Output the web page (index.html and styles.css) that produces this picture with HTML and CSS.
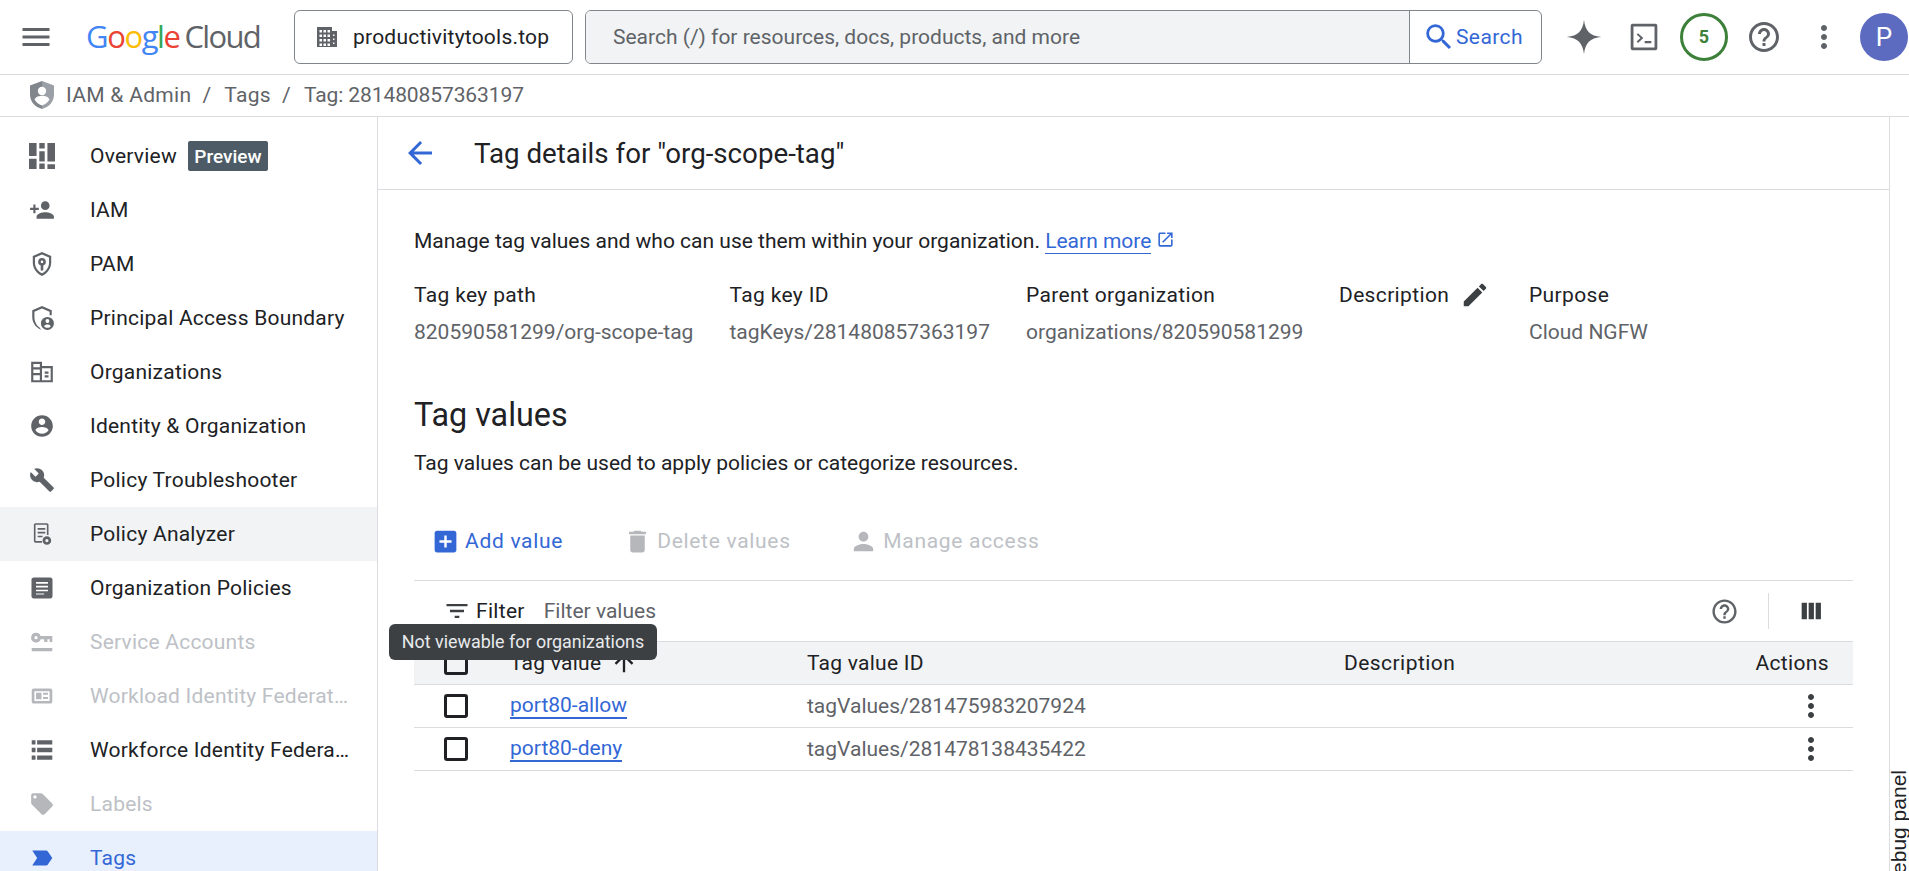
FILE: index.html
```html
<!DOCTYPE html>
<html lang="en">
<head>
<meta charset="utf-8">
<title>Tag details</title>
<link rel="stylesheet" href="styles.css">
</head>
<body>
<svg class="defs" aria-hidden="true">
  <symbol id="i-menu" viewBox="0 0 24 24"><path d="M3 18h18v-2H3v2zm0-5h18v-2H3v2zm0-7v2h18V6H3z"/></symbol>
  <symbol id="i-domain" viewBox="0 0 24 24"><path fill-rule="evenodd" d="M2 2h15v4h5v16H2V2zm2.500 3v2.500h2.500V5H4.500zm4 0v2.500h2.500V5H8.500zm4 0v2.500H15V5h-2.500zm-8 4.500V12h2.500V9.500H4.500zm4 0V12h2.500V9.500H8.500zm4 0V12H15V9.500h-2.500zm-8 4.500v2.500h2.500V14H4.500zm4 0v2.500h2.500V14H8.500zm4 0v2.500H15V14h-2.500zm-8 4.500V21h2.500v-2.500H4.500zm4 0V21h2.500v-2.500H8.500zm4 0V21H15v-2.500h-2.500zM18 9.500V11h1.500V9.500H18zm0 4V15h1.500v-1.500H18zm0 4V19h1.500v-1.500H18z"/></symbol>
  <symbol id="i-search" viewBox="0 0 24 24"><path d="M15.500 14h-.79l-.28-.27A6.471 6.471 0 0 0 16 9.500 6.500 6.500 0 1 0 9.500 16c1.610 0 3.090-.59 4.230-1.570l.27.28v.79l5 4.990L20.490 19l-4.990-5zm-6 0C7.010 14 5 11.990 5 9.500S7.010 5 9.500 5 14 7.010 14 9.500 11.990 14 9.500 14z"/></symbol>
  <symbol id="i-spark" viewBox="0 0 24 24"><path d="M12 0.500C12.800 8 16 11.200 23.500 12 16 12.800 12.800 16 12 23.500 11.200 16 8 12.800 0.500 12 8 11.200 11.200 8 12 0.500z"/></symbol>
  <symbol id="i-terminal" viewBox="0 0 24 24"><path fill-rule="evenodd" d="M3.500 2h17A1.500 1.500 0 0 1 22 3.500v17a1.500 1.500 0 0 1-1.500 1.500h-17A1.500 1.500 0 0 1 2 20.500v-17A1.500 1.500 0 0 1 3.500 2zm.6 2.100v15.800h15.800V4.100H4.100z"/><path d="M6.500 10.200l1-1.100 4 3.700-4 3.700-1-1.100 2.800-2.600-2.800-2.600zM12.500 15h5v1.600h-5z"/></symbol>
  <symbol id="i-help" viewBox="0 0 24 24"><path d="M11 18h2v-2h-2v2zm1-16C6.480 2 2 6.480 2 12s4.480 10 10 10 10-4.480 10-10S17.520 2 12 2zm0 18c-4.410 0-8-3.590-8-8s3.590-8 8-8 8 3.590 8 8-3.590 8-8 8zm0-14c-2.210 0-4 1.790-4 4h2c0-1.100.9-2 2-2s2 .9 2 2c0 2-3 1.750-3 5h2c0-2.250 3-2.500 3-5 0-2.210-1.790-4-4-4z"/></symbol>
  <symbol id="i-more" viewBox="0 0 24 24"><path d="M12 8c1.100 0 2-.9 2-2s-.9-2-2-2-2 .9-2 2 .9 2 2 2zm0 2c-1.100 0-2 .9-2 2s.9 2 2 2 2-.9 2-2-.9-2-2-2zm0 6c-1.100 0-2 .9-2 2s.9 2 2 2 2-.9 2-2-.9-2-2-2z"/></symbol>
  <symbol id="i-back" viewBox="0 0 24 24"><path d="M20 11H7.830l5.590-5.590L12 4l-8 8 8 8 1.410-1.410L7.830 13H20v-2z"/></symbol>
  <symbol id="i-iamshield" viewBox="0 0 24 28"><path fill="#80868b" d="M12 0L0 4.500v9C0 20.500 5 26 12 28V0z"/><path fill="#9aa0a6" d="M12 0l12 4.500v9C24 20.500 19 26 12 28V0z"/><circle cx="12" cy="10" r="4.200" fill="#fff"/><path fill="#fff" d="M4.500 18.500C6 15.500 9 14.800 12 14.800s6 .7 7.500 3.700c-1.700 2.800-4.300 4.900-7.500 6-3.200-1.100-5.800-3.200-7.500-6z"/></symbol>
  <symbol id="i-overview" viewBox="0 0 24 24"><path d="M0 0h7v12H0zM9.500 0h5v5h-5zM17 0h7v17h-7zM9.500 7.500h5v9.500h-5zM0 14.500h7V24H0zM9.500 19h5v5h-5zM17 19.500h7V24h-7z"/></symbol>
  <symbol id="i-personadd" viewBox="0 0 24 24"><path d="M15 12c2.210 0 4-1.790 4-4s-1.790-4-4-4-4 1.790-4 4 1.790 4 4 4zm-9-2V7H4v3H1v2h3v3h2v-3h3v-2H6zm9 4c-2.670 0-8 1.340-8 4v2h16v-2c0-2.660-5.330-4-8-4z"/></symbol>
  <symbol id="i-pam" viewBox="0 0 24 24"><path fill-rule="evenodd" d="M12 1L3.500 4.500v6.300c0 5.200 3.600 10.100 8.500 12.200 4.900-2.100 8.500-7 8.500-12.200V4.500L12 1zm0 2.200l6.500 2.700v4.900c0 4-2.700 7.900-6.500 9.800-3.800-1.900-6.500-5.800-6.500-9.800V5.900L12 3.200z"/><path fill-rule="evenodd" d="M12 6.500a3.500 3.500 0 0 0-1.200 6.800V18h2.400v-4.700A3.500 3.500 0 0 0 12 6.500zm0 2.300a1.200 1.200 0 1 1 0 2.400 1.200 1.200 0 0 1 0-2.400z"/></symbol>
  <symbol id="i-pab" viewBox="0 0 24 24"><path d="M12 1L3 4.800v6.200c0 5.300 3.500 10.200 8.500 11.800-.7-.6-1.300-1.300-1.700-2.100C7 19 5 15.200 5 11V6.200L12 3.200 19 6.200V9.500h2V4.800L12 1z"/><path fill-rule="evenodd" d="M17 11a6 6 0 1 0 0 12 6 6 0 0 0 0-12zm0 2a1.800 1.800 0 1 1 0 3.600 1.800 1.800 0 0 1 0-3.600zm0 8c-1.300 0-2.400-.6-3.100-1.500.5-1 1.800-1.500 3.100-1.500s2.600.5 3.100 1.500c-.7.900-1.800 1.500-3.100 1.500z"/></symbol>
  <symbol id="i-org" viewBox="0 0 24 24"><path fill-rule="evenodd" d="M2 2.500h10v4h10v15H2v-19zm2 2v3.200h6V4.500H4zm0 5.200V13h6V9.700H4zM4 15v4.500h6V15H4zm8-6.500v11h8v-11h-8zm2.500 3h3.500v2h-3.500v-2zm0 3.500h3.500v2h-3.500v-2z"/></symbol>
  <symbol id="i-account" viewBox="0 0 24 24"><path d="M12 2C6.480 2 2 6.480 2 12s4.480 10 10 10 10-4.480 10-10S17.520 2 12 2zm0 3c1.660 0 3 1.340 3 3s-1.340 3-3 3-3-1.340-3-3 1.340-3 3-3zm0 14.200c-2.500 0-4.710-1.280-6-3.220.03-1.990 4-3.080 6-3.080 1.990 0 5.970 1.090 6 3.080-1.290 1.940-3.500 3.220-6 3.220z"/></symbol>
  <symbol id="i-build" viewBox="0 0 24 24"><path d="M22.700 19l-9.100-9.100c.9-2.300.4-5-1.500-6.900-2-2-5-2.400-7.400-1.300L9 6 6 9 1.600 4.700C.4 7.100.9 10.100 2.900 12.100c1.900 1.900 4.600 2.400 6.900 1.500l9.100 9.100c.4.400 1 .4 1.400 0l2.300-2.300c.5-.4.5-1.100.1-1.400z"/></symbol>
  <symbol id="i-analyzer" viewBox="0 0 24 24"><path fill-rule="evenodd" d="M6 2h10.500c.8 0 1.500.7 1.500 1.500V13h-1.500V3.500H6v15h6V20H6c-.8 0-1.500-.7-1.500-1.500v-15C4.500 2.700 5.200 2 6 2z"/><path d="M8 6.500h7V8H8zM8 10h7v1.500H8zM8 13.500h4.500V15H8z"/><path fill-rule="evenodd" d="M16.500 14a4 4 0 0 0 0 8 4 4 0 0 0 0-8zm0 2.500a1.500 1.500 0 1 1 0 3 1.500 1.500 0 0 1 0-3z"/></symbol>
  <symbol id="i-article" viewBox="0 0 24 24"><path fill-rule="evenodd" d="M4.300 2.300h15.400c1.100 0 2 .9 2 2v15.400c0 1.100-.9 2-2 2H4.300c-1.100 0-2-.9-2-2V4.300c0-1.100.9-2 2-2zM6.500 6.500v1.500h11V6.500h-11zm0 3.500v1.500h11V10h-11zm0 3.500V15h11v-1.500h-11zm0 3.500v1h7.500v-1H6.500z"/></symbol>
  <symbol id="i-key" viewBox="0 0 24 24"><path fill-rule="evenodd" d="M6.500 3.500a4.500 4.500 0 0 1 4.200 3h10.800v5.500h-2.500V9.500h-2v2.500H14V9.500h-3.300a4.500 4.500 0 1 1-4.200-6zm0 3a1.500 1.500 0 1 0 0 3 1.500 1.500 0 0 0 0-3zM2.500 17.500h19V20.500h-19z"/></symbol>
  <symbol id="i-card" viewBox="0 0 24 24"><path fill-rule="evenodd" d="M4.500 5h15c1.200 0 2 .8 2 2v10c0 1.200-.8 2-2 2h-15c-1.200 0-2-.8-2-2V7c0-1.200.8-2 2-2zm.5 2.500v9h14v-9H5zM6.500 9h5v6h-5V9zm6.500 0h4.500v1.800H13V9zm0 4h4.500v1.800H13V13z"/></symbol>
  <symbol id="i-list" viewBox="0 0 24 24"><path d="M2.500 3h3.500v4H2.500zM7.500 3h14v4h-14zM2.500 10h3.500v4H2.500zM7.500 10h14v4h-14zM2.500 17h3.500v4H2.500zM7.500 17h14v4h-14z"/></symbol>
  <symbol id="i-label" viewBox="0 0 24 24"><path d="M21.410 11.580l-9-9C12.050 2.220 11.550 2 11 2H4c-1.100 0-2 .9-2 2v7c0 .55.22 1.050.59 1.420l9 9c.36.36.86.58 1.410.58.55 0 1.050-.22 1.410-.59l7-7c.37-.36.59-.86.59-1.410 0-.55-.23-1.060-.59-1.420zM5.500 7C4.670 7 4 6.330 4 5.500S4.670 4 5.500 4 7 4.670 7 5.500 6.330 7 5.500 7z"/></symbol>
  <symbol id="i-tag" viewBox="0 0 24 24"><path d="M3 19l12.500.01c.8 0 1.500-.4 1.900-1L21.500 12l-4.100-6c-.4-.6-1.100-1-1.900-1L3 5l4.500 7L3 19z"/></symbol>
  <symbol id="i-edit" viewBox="0 0 24 24"><path d="M3 17.250V21h3.750L17.810 9.940l-3.750-3.750L3 17.250zM20.710 7.040c.39-.39.39-1.020 0-1.410l-2.340-2.340c-.39-.39-1.020-.39-1.410 0l-1.830 1.830 3.750 3.750 1.830-1.830z"/></symbol>
  <symbol id="i-open" viewBox="0 0 24 24"><path d="M19 19H5V5h7V3H5c-1.110 0-2 .9-2 2v14c0 1.100.89 2 2 2h14c1.100 0 2-.9 2-2v-7h-2v7zM14 3v2h3.590l-9.830 9.830 1.410 1.410L19 6.410V10h2V3h-7z"/></symbol>
  <symbol id="i-add" viewBox="0 0 24 24"><path d="M19 3H5c-1.110 0-2 .9-2 2v14c0 1.100.89 2 2 2h14c1.100 0 2-.9 2-2V5c0-1.100-.9-2-2-2zm-2 10h-4v4h-2v-4H7v-2h4V7h2v4h4v2z"/></symbol>
  <symbol id="i-delete" viewBox="0 0 24 24"><path d="M6 19c0 1.100.9 2 2 2h8c1.100 0 2-.9 2-2V7H6v12zM19 4h-3.500l-1-1h-5l-1 1H5v2h14V4z"/></symbol>
  <symbol id="i-person" viewBox="0 0 24 24"><path d="M12 12c2.210 0 4-1.790 4-4s-1.790-4-4-4-4 1.790-4 4 1.790 4 4 4zm0 2c-2.670 0-8 1.340-8 4v2h16v-2c0-2.660-5.330-4-8-4z"/></symbol>
  <symbol id="i-filter" viewBox="0 0 24 24"><path d="M10 18h4v-2h-4v2zM3 6v2h18V6H3zm3 7h12v-2H6v2z"/></symbol>
  <symbol id="i-columns" viewBox="0 0 24 24"><path d="M10 19h4.500V5H10v14zm-6 0h4.500V5H4v14zM16 5v14h4.500V5H16z"/></symbol>
  <symbol id="i-up" viewBox="0 0 24 24"><path d="M4 12l1.410 1.410L11 7.830V20h2V7.830l5.580 5.590L20 12l-8-8-8 8z"/></symbol>
</svg>

<header class="topbar">
  <svg class="ic ic-menu"><use href="#i-menu"/></svg>
  <div class="logo"><span class="lb">G</span><span class="lr">o</span><span class="ly">o</span><span class="lb">g</span><span class="lg">l</span><span class="lr">e</span><span class="logo-cloud">Cloud</span></div>
  <button class="org"><svg class="ic ic-domain"><use href="#i-domain"/></svg><span>productivitytools.top</span></button>
  <div class="search">
    <div class="search-input">Search (/) for resources, docs, products, and more</div>
    <div class="search-btn"><svg class="ic ic-search"><use href="#i-search"/></svg><span>Search</span></div>
  </div>
  <div class="top-actions">
    <span class="slot"><svg class="ic ic-spark"><use href="#i-spark"/></svg></span>
    <span class="slot"><svg class="ic ic-term"><use href="#i-terminal"/></svg></span>
    <span class="slot"><span class="badge">5</span></span>
    <span class="slot"><svg class="ic ic-help"><use href="#i-help"/></svg></span>
    <span class="slot"><svg class="ic ic-help"><use href="#i-more"/></svg></span>
    <span class="slot"><span class="avatar">P</span></span>
  </div>
</header>

<nav class="crumbs">
  <svg class="ic-iam"><use href="#i-iamshield"/></svg>
  <span>IAM &amp; Admin</span><span class="sep">/</span><span>Tags</span><span class="sep">/</span><span class="crumb-last">Tag: 281480857363197</span>
</nav>

<div class="main">
  <aside class="side">
    <a class="nav"><svg class="ic ic-nav"><use href="#i-overview"/></svg><span>Overview</span><span class="preview">Preview</span></a>
    <a class="nav"><svg class="ic ic-nav"><use href="#i-personadd"/></svg><span>IAM</span></a>
    <a class="nav"><svg class="ic ic-nav"><use href="#i-pam"/></svg><span>PAM</span></a>
    <a class="nav"><svg class="ic ic-nav"><use href="#i-pab"/></svg><span>Principal Access Boundary</span></a>
    <a class="nav"><svg class="ic ic-nav"><use href="#i-org"/></svg><span>Organizations</span></a>
    <a class="nav"><svg class="ic ic-nav"><use href="#i-account"/></svg><span>Identity &amp; Organization</span></a>
    <a class="nav"><svg class="ic ic-nav"><use href="#i-build"/></svg><span>Policy Troubleshooter</span></a>
    <a class="nav hover"><svg class="ic ic-nav"><use href="#i-analyzer"/></svg><span>Policy Analyzer</span></a>
    <a class="nav"><svg class="ic ic-nav"><use href="#i-article"/></svg><span>Organization Policies</span></a>
    <a class="nav off"><svg class="ic ic-nav"><use href="#i-key"/></svg><span>Service Accounts</span></a>
    <a class="nav off"><svg class="ic ic-nav"><use href="#i-card"/></svg><span class="trunc">Workload Identity Federation</span></a>
    <a class="nav"><svg class="ic ic-nav"><use href="#i-list"/></svg><span class="trunc">Workforce Identity Federation</span></a>
    <a class="nav off"><svg class="ic ic-nav"><use href="#i-label"/></svg><span>Labels</span></a>
    <a class="nav active"><svg class="ic ic-nav"><use href="#i-tag"/></svg><span>Tags</span></a>
  </aside>

  <section class="content">
    <div class="title-bar">
      <svg class="ic ic-back"><use href="#i-back"/></svg>
      <h1>Tag details for "org-scope-tag"</h1>
    </div>
    <div class="body">
      <p class="intro">Manage tag values and who can use them within your organization. <a class="link">Learn more</a><svg class="ic ic-open"><use href="#i-open"/></svg></p>
      <div class="meta">
        <div class="m m1"><div class="m-l">Tag key path</div><div class="m-v">820590581299/org-scope-tag</div></div>
        <div class="m m2"><div class="m-l">Tag key ID</div><div class="m-v">tagKeys/281480857363197</div></div>
        <div class="m m3"><div class="m-l">Parent organization</div><div class="m-v">organizations/820590581299</div></div>
        <div class="m m4"><div class="m-l">Description<svg class="ic ic-edit"><use href="#i-edit"/></svg></div></div>
        <div class="m m5"><div class="m-l">Purpose</div><div class="m-v">Cloud NGFW</div></div>
      </div>
      <h2>Tag values</h2>
      <p class="sub">Tag values can be used to apply policies or categorize resources.</p>
      <div class="toolbar">
        <a class="tool tool-add"><svg class="ic ic-tool"><use href="#i-add"/></svg>Add value</a>
        <a class="tool tool-del"><svg class="ic ic-tool"><use href="#i-delete"/></svg>Delete values</a>
        <a class="tool tool-mng"><svg class="ic ic-tool"><use href="#i-person"/></svg>Manage access</a>
      </div>
      <div class="table-wrap">
        <div class="filter">
          <svg class="ic ic-filter"><use href="#i-filter"/></svg>
          <span class="f-label">Filter</span>
          <span class="f-hint">Filter values</span>
          <span class="f-right">
            <svg class="ic ic-fhelp"><use href="#i-help"/></svg>
            <span class="f-div"></span>
            <svg class="ic ic-cols"><use href="#i-columns"/></svg>
          </span>
        </div>
        <div class="row head">
          <span class="c-check"><span class="check"></span></span>
          <span class="c-val">Tag value<svg class="ic ic-sort"><use href="#i-up"/></svg></span>
          <span class="c-id">Tag value ID</span>
          <span class="c-desc">Description</span>
          <span class="c-act">Actions</span>
        </div>
        <div class="row">
          <span class="c-check"><span class="check"></span></span>
          <span class="c-val"><a class="link">port80-allow</a></span>
          <span class="c-id">tagValues/281475983207924</span>
          <span class="c-desc"></span>
          <span class="c-act"><svg class="ic ic-more"><use href="#i-more"/></svg></span>
        </div>
        <div class="row">
          <span class="c-check"><span class="check"></span></span>
          <span class="c-val"><a class="link">port80-deny</a></span>
          <span class="c-id">tagValues/281478138435422</span>
          <span class="c-desc"></span>
          <span class="c-act"><svg class="ic ic-more"><use href="#i-more"/></svg></span>
        </div>
        <div class="tooltip">Not viewable for organizations</div>
      </div>
    </div>
  </section>

  <aside class="debug"><span>Debug panel</span></aside>
</div>
</body>
</html>
```
FILE: styles.css
```css
* { box-sizing: border-box; }
html, body { margin: 0; height: 871px; overflow: hidden; background: #fff; }
body { font-family: Roboto, "Liberation Sans", sans-serif; font-size: 21px; color: #202124; }
.defs { width: 0; height: 0; display: block; }
.ic { fill: #5f6368; display: block; flex: none; }

/* top bar */
.topbar { height: 75px; border-bottom: 1px solid #dadce0; display: flex; align-items: center; padding: 0 0 1px 18px; overflow: hidden; }
.ic-menu { width: 36px; height: 36px; }
.logo { flex: none; margin-left: 32px; width: 208px; font-family: "Open Sans", Roboto, sans-serif; font-size: 31px; letter-spacing: -1.4px; white-space: nowrap; line-height: 1; }
.lb { color: #4285f4; } .lr { color: #ea4335; } .ly { color: #fbbc04; } .lg { color: #34a853; }
.logo-cloud { color: #5f6368; margin-left: 5px; letter-spacing: -1.7px; }
.org { flex: none; width: 279px; height: 54px; border: 1px solid #80868b; border-radius: 6px; background: #fff; display: flex; align-items: center; padding: 0 0 0 20px; font: inherit; letter-spacing: .22px; color: #202124; gap: 14px; }
.ic-domain { width: 24px; height: 24px; }
.search { flex: none; margin-left: 12px; width: 957px; height: 54px; display: flex; border: 1px solid #80868b; border-radius: 6px; overflow: hidden; }
.search-input { flex: 1; background: #f1f3f4; display: flex; align-items: center; padding-left: 27px; color: #5f6368; }
.search-btn { width: 132px; border-left: 1px solid #80868b; display: flex; align-items: center; padding-left: 12px; color: #3367d6; font-weight: 450; letter-spacing: .4px; }
.ic-search { width: 34px; height: 34px; fill: #3367d6; }
.top-actions { flex: none; display: flex; margin-left: 12px; }
.slot { width: 60px; height: 60px; display: flex; align-items: center; justify-content: center; }
.ic-spark { width: 36px; height: 36px; }
.ic-term { width: 32px; height: 32px; }
.ic-help { width: 36px; height: 36px; }
.badge { width: 48px; height: 48px; border: 3px solid #3c8039; border-radius: 50%; display: flex; align-items: center; justify-content: center; font-size: 18px; font-weight: 700; color: #3c8039; }
.avatar { width: 48px; height: 48px; border-radius: 50%; background: #5c6bc0; color: #fff; display: flex; align-items: center; justify-content: center; font-size: 26px; }

/* breadcrumbs */
.crumbs { height: 42px; border-bottom: 1px solid #dadce0; display: flex; align-items: center; padding: 0 0 2px 30px; color: #5f6368; letter-spacing: .3px; }
.crumb-last { letter-spacing: -.1px; }
.ic-iam { width: 24px; height: 28px; margin-right: 12px; }
.sep { margin: 0 13px 0 11px; }

/* layout */
.main { display: flex; height: 754px; }

/* sidebar */
.side { width: 378px; flex: none; border-right: 1px solid #dadce0; padding-top: 12px; overflow: hidden; }
.nav { height: 54px; display: flex; align-items: center; padding-left: 29px; color: #202124; white-space: nowrap; letter-spacing: .22px; }
.ic-nav { width: 26px; height: 26px; margin-right: 35px; }
.trunc { width: 260px; overflow: hidden; text-overflow: ellipsis; }
.preview { margin-left: 11px; height: 30px; width: 80px; justify-content: center; border-radius: 2px; background: #4d5b66; color: #fff; font-weight: 500; font-size: 19px; letter-spacing: 0; display: flex; align-items: center; }
.hover { background: #f1f3f4; }
.off { color: #bdc1c6; }
.off .ic { fill: #b5b7ba; }
.active { background: #e8f0fe; color: #3367d6; }
.active .ic { fill: #3367d6; }

/* content */
.content { flex: 1; min-width: 0; }
.title-bar { height: 73px; border-bottom: 1px solid #dadce0; display: flex; align-items: center; padding: 0 0 0 24px; }
.ic-back { width: 36px; height: 36px; fill: #3367d6; margin-right: 36px; }
h1 { margin: 0; font-size: 27.7px; font-weight: 400; }
.body { padding: 37px 36px 0; }
.intro { margin: 0; height: 28px; line-height: 28px; display: flex; align-items: center; white-space: pre; }
.link { color: #3367d6; border-bottom: 2px solid #3367d6; line-height: 24px; }
.intro .link { border-bottom-width: 1px; }
.ic-open { width: 19px; height: 19px; fill: #3367d6; margin-left: 5px; margin-top: -3px; }
.meta { display: flex; margin-top: 26px; }
.m-l { height: 28px; line-height: 28px; display: flex; align-items: center; letter-spacing: .35px; }
.m-v { color: #5f6368; margin-top: 9px; height: 28px; line-height: 28px; }
.m1 { width: 315.5px; } .m2 { width: 296.5px; } .m3 { width: 313px; } .m4 { width: 190px; }
.ic-edit { width: 30px; height: 30px; margin-left: 11px; fill: #3c4043; }
h2 { margin: 49px 0 0; font-size: 32.3px; font-weight: 400; line-height: 40px; }
.sub { margin: 14px 0 0; line-height: 28px; height: 28px; }
.toolbar { display: flex; height: 81px; margin-top: 23px; padding-top: 21px; border-bottom: 1px solid #dadce0; }
.tool { display: flex; align-items: center; height: 40px; font-weight: 450; color: #bdc1c6; letter-spacing: .7px; }
.ic-tool { width: 29px; height: 29px; margin-right: 5px; }
.tool-add { color: #3367d6; margin-left: 17px; }
.tool-add .ic { fill: #3367d6; }
.tool-del { margin-left: 60px; } .tool-del .ic { fill: #b5b7ba; }
.tool-mng { margin-left: 58.5px; } .tool-mng .ic { fill: #b5b7ba; }
.table-wrap { position: relative; }
.filter { height: 60px; display: flex; align-items: center; padding-left: 29px; }
.ic-filter { width: 28px; height: 28px; fill: #3c4043; margin-right: 5px; }
.f-label { font-weight: 450; letter-spacing: .3px; }
.f-hint { margin-left: 19px; color: #5f6368; }
.f-right { margin-left: auto; display: flex; align-items: center; padding-right: 28px; }
.ic-fhelp { width: 29px; height: 29px; }
.f-div { width: 1px; height: 36px; background: #dadce0; margin: 0 28px 0 29px; }
.ic-cols { width: 28px; height: 28px; fill: #3c4043; }
.row { height: 43px; display: flex; align-items: center; border-bottom: 1px solid #dadce0; color: #5f6368; }
.head { height: 44px; background: #f1f3f4; border-top: 1px solid #dadce0; color: #202124; font-weight: 450; letter-spacing: .25px; }
.head .c-desc { letter-spacing: .45px; }
.head .c-act { letter-spacing: .35px; }
.c-check { width: 96px; padding-left: 30px; flex: none; }
.check { display: block; width: 24px; height: 24px; border: 3px solid #202124; border-radius: 3px; }
.c-val { width: 297px; flex: none; display: flex; align-items: center; }
.c-id { width: 537px; flex: none; }
.c-desc { flex: 1; }
.c-act { padding-right: 24px; display: flex; justify-content: flex-end; }
.ic-sort { width: 28px; height: 28px; fill: #202124; margin-left: 9px; }
.ic-more { width: 36px; height: 36px; fill: #3c4043; }
.tooltip { position: absolute; left: -25px; top: 43px; width: 268px; height: 36px; padding-bottom: 2px; background: #3c4043; color: #e8eaed; border-radius: 6px; font-size: 17.9px; display: flex; align-items: center; justify-content: center; }

/* debug strip */
.debug { width: 20px; flex: none; border-left: 1px solid #dadce0; overflow: hidden; padding-top: 653px; }
.debug span { display: block; writing-mode: vertical-rl; transform: rotate(180deg); font-size: 21px; font-family: "Liberation Sans", sans-serif; line-height: 22px; color: #202124; width: 22px; margin-left: -2px; white-space: nowrap; }
```
